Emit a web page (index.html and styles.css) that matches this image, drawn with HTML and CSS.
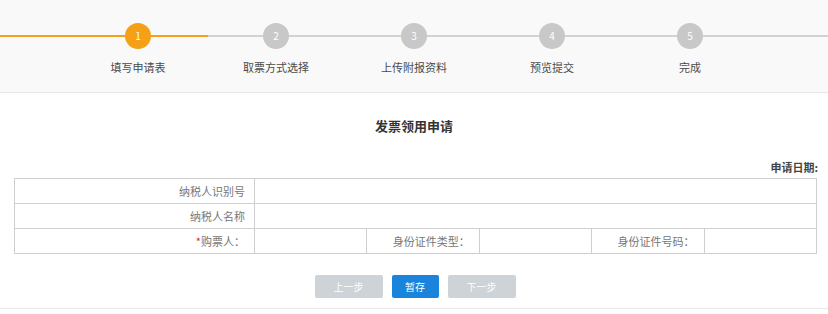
FILE: index.html
```html
<!DOCTYPE html>
<html lang="zh-CN">
<head>
<meta charset="utf-8">
<title>发票领用申请</title>
<link rel="stylesheet" href="styles.css">
</head>
<body>
<div class="steps">
  <div class="track"></div>
  <ul class="step-list">
    <li class="step active"><span class="dot">1</span><span class="label">填写申请表</span></li>
    <li class="step"><span class="dot">2</span><span class="label">取票方式选择</span></li>
    <li class="step"><span class="dot">3</span><span class="label">上传附报资料</span></li>
    <li class="step"><span class="dot">4</span><span class="label">预览提交</span></li>
    <li class="step"><span class="dot">5</span><span class="label">完成</span></li>
  </ul>
</div>
<h1 class="title">发票领用申请</h1>
<div class="date">申请日期:</div>
<table class="form">
  <colgroup>
    <col class="c-first">
    <col><col><col><col><col>
  </colgroup>
  <tr>
    <td class="lbl">纳税人识别号</td>
    <td colspan="5"></td>
  </tr>
  <tr>
    <td class="lbl">纳税人名称</td>
    <td colspan="5"></td>
  </tr>
  <tr>
    <td class="lbl"><span class="req">*</span>购票人：</td>
    <td></td>
    <td class="lbl">身份证件类型：</td>
    <td></td>
    <td class="lbl">身份证件号码：</td>
    <td></td>
  </tr>
</table>
<div class="actions">
  <button class="btn btn-gray btn-wide">上一步</button>
  <button class="btn btn-blue">暂存</button>
  <button class="btn btn-gray btn-wide">下一步</button>
</div>
</body>
</html>
```
FILE: styles.css
```css
html, body {
  margin: 0;
  padding: 0;
  background: #ffffff;
  font-family: "Noto Sans CJK SC", "Noto Sans", sans-serif;
  color: #333;
}

.steps {
  position: relative;
  height: 92px;
  background: #f9f9f9;
  border-bottom: 1px solid #e6e6e6;
}

.track {
  position: absolute;
  left: 0;
  right: 0;
  top: 35px;
  height: 2px;
  background: linear-gradient(to right, #f5a017 208px, #d2d2d2 208px);
}

.step-list {
  position: relative;
  display: flex;
  width: 690px;
  margin: 0 auto;
  padding: 0;
  list-style: none;
}

.step {
  width: 138px;
  display: flex;
  flex-direction: column;
  align-items: center;
}

.dot {
  margin-top: 23px;
  width: 26px;
  height: 26px;
  border-radius: 50%;
  background: #c8c8c8;
  color: #fff;
  font-size: 10px;
  line-height: 26px;
  text-align: center;
}

.step.active .dot {
  background: #f5a017;
}

.label {
  margin-top: 10px;
  font-size: 11px;
  line-height: 16px;
  color: #4a4a4a;
}

.title {
  margin: 23px 0 0;
  font-size: 13px;
  line-height: 20px;
  font-weight: bold;
  text-align: center;
  color: #333;
}

.date {
  margin-top: 23px;
  padding-right: 10px;
  text-align: right;
  font-size: 11px;
  line-height: 16px;
  font-weight: bold;
  color: #444;
}

.form {
  margin: 3px 11px 0 14px;
  width: 803px;
  border-collapse: collapse;
  table-layout: fixed;
}

.c-first {
  width: 240px;
}

.form td {
  height: 24px;
  padding: 0 9px 0 0;
  border: 1px solid #cfcfcf;
  font-size: 11px;
  color: #777;
}

.form td.lbl {
  text-align: right;
}

.req {
  color: #e8262b;
}

.actions {
  display: flex;
  justify-content: center;
  gap: 9px;
  margin-top: 21px;
  padding-bottom: 10px;
  padding-left: 2px;
  border-bottom: 1px solid #e8e8e8;
}

.btn {
  height: 23px;
  padding: 0;
  border: none;
  border-radius: 2px;
  font-family: inherit;
  font-size: 10px;
  color: #fff;
  width: 47px;
}

.btn-wide {
  width: 68px;
}

.btn-gray {
  background: #cdd3d6;
}

.btn-blue {
  background: #1a83dc;
}
```
